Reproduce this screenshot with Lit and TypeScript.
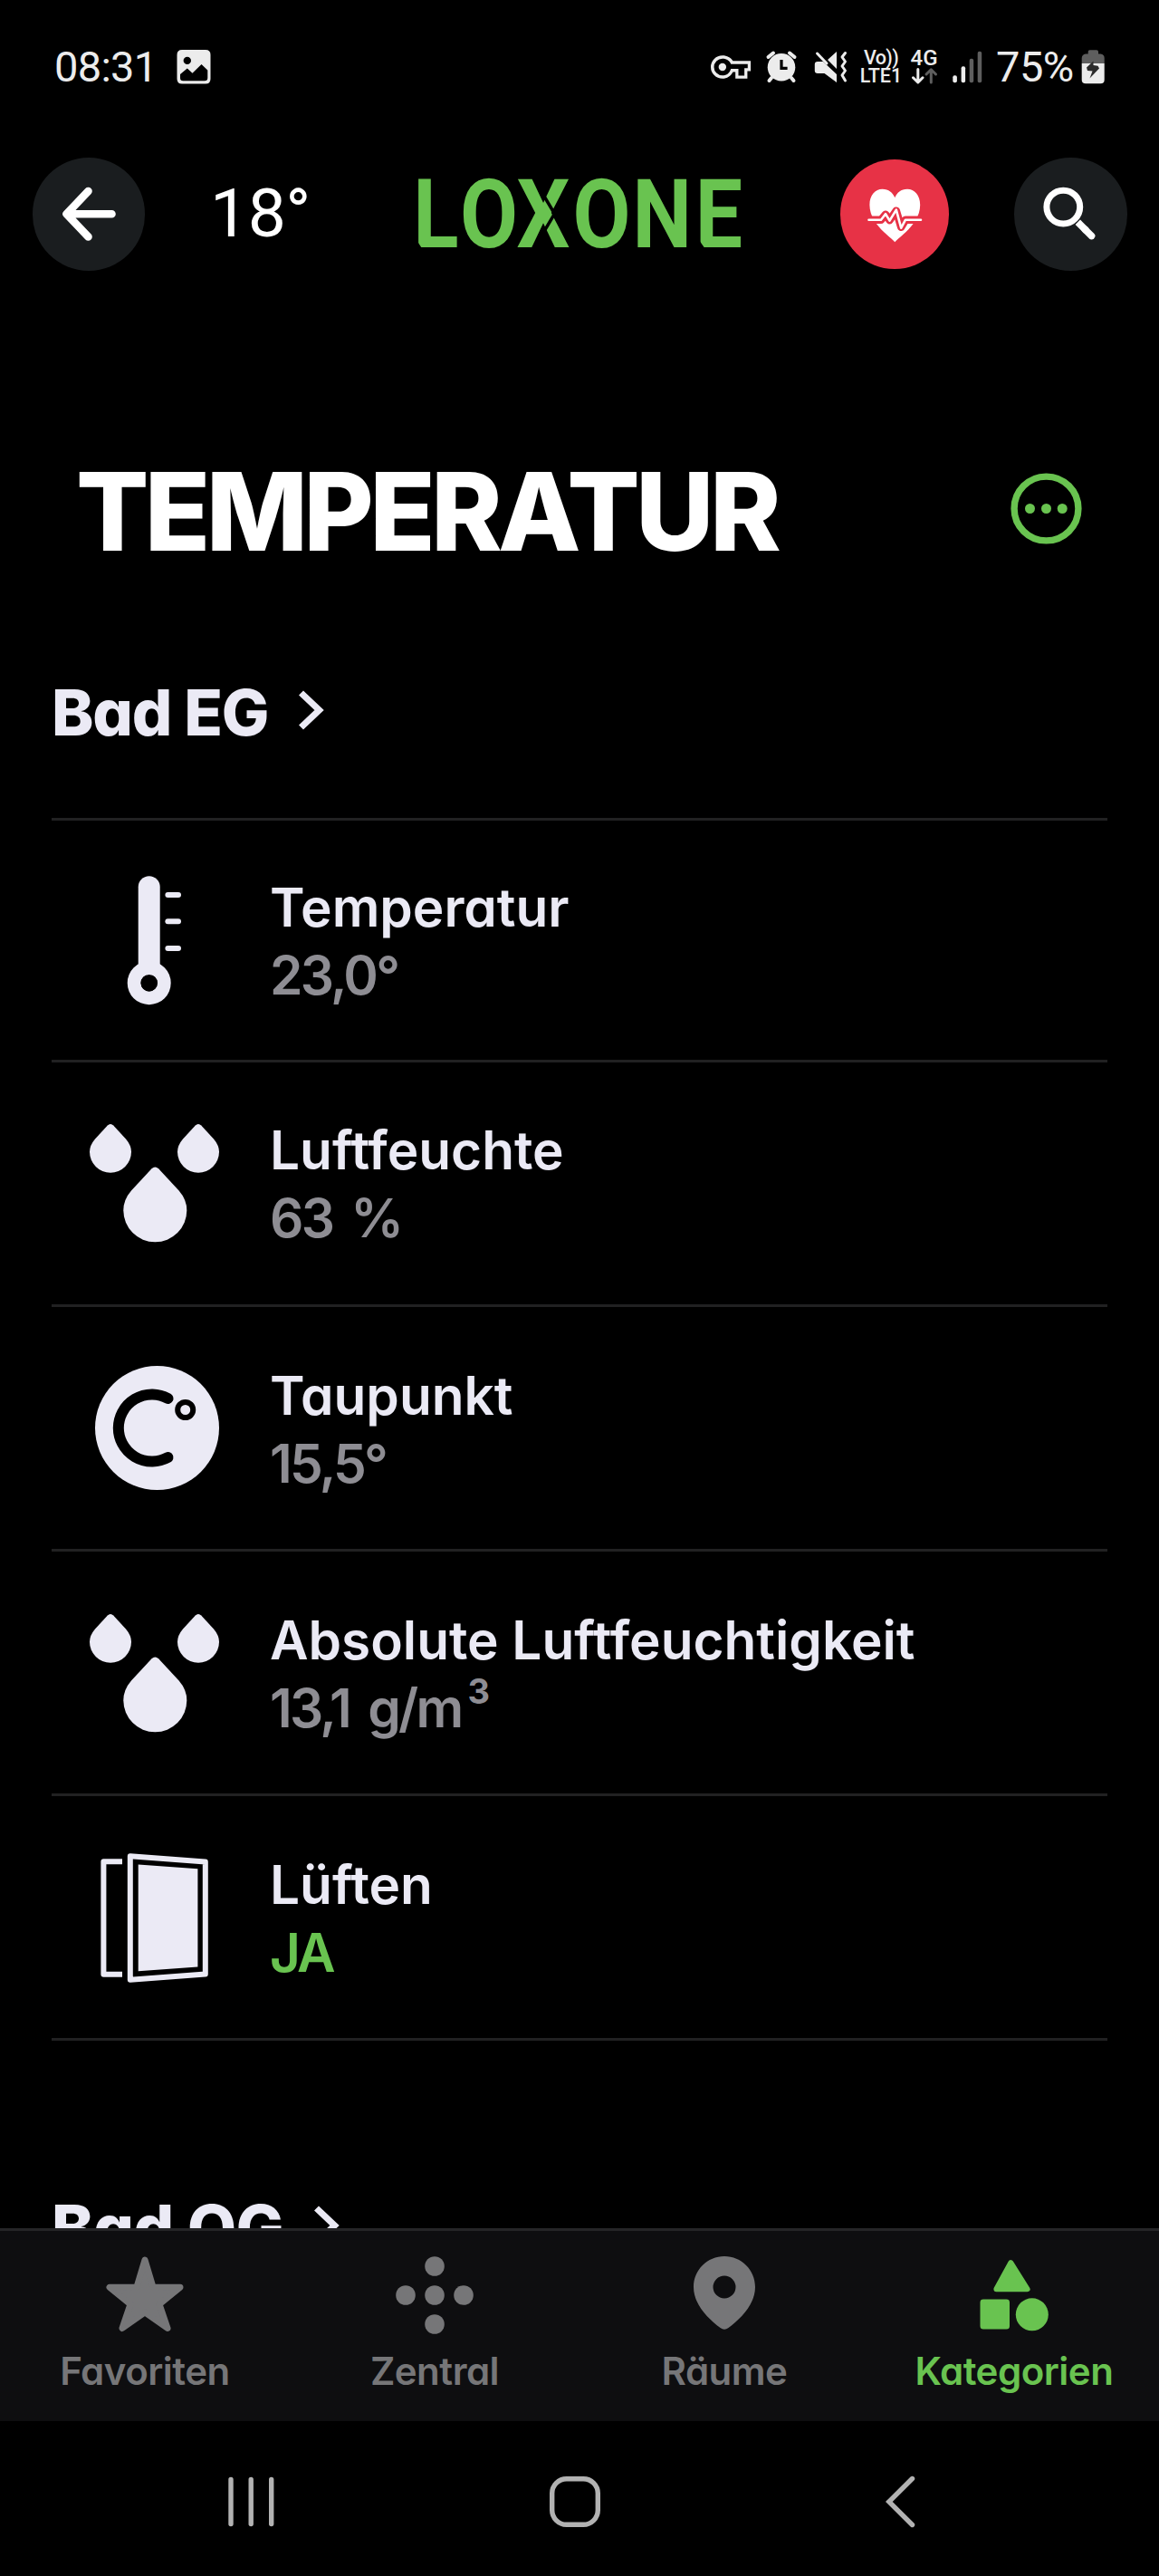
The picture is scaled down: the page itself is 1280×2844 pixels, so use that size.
import { LitElement, html, css, svg, nothing } from "lit";
import { customElement, property } from "lit/decorators.js";

const icons: Record<string, unknown> = {
  thermometer: svg`
    <rect x="53.7" y="1.2" width="24" height="110" rx="12"/>
    <path fill-rule="evenodd" d="M65.7 95.2a24 24 0 1 0 0 48a24 24 0 1 0 0-48zM65.7 110a9.2 9.2 0 1 1 0 18.4a9.2 9.2 0 1 1 0-18.4z"/>
    <path class="hole" d="M65.7 110a9.2 9.2 0 1 1 0 18.4a9.2 9.2 0 1 1 0-18.4z"/>
    <rect x="83.4" y="18.9" width="17.6" height="6" rx="3"/>
    <rect x="83.4" y="48.2" width="17.6" height="6" rx="3"/>
    <rect x="83.4" y="77.9" width="17.6" height="6" rx="3"/>`,
  drops: svg`
    <path d="M19.8 8.4Q23 5.4 26.2 8.4L40 23.5Q46 30.5 46 37.8A23 23 0 0 1 0 37.8Q0 30.5 6 23.5Z"/>
    <path d="M116.8 8.4Q120 5.4 123.2 8.4L137 23.5Q143 30.5 143 37.8A23 23 0 0 1 97 37.8Q97 30.5 103 23.5Z"/>
    <path d="M68.5 56.2Q72.3 52.8 76.1 56.2L98.6 80.5Q107.3 90.5 107.3 102.3A35 35 0 0 1 37.3 102.3Q37.3 90.5 46 80.5Z"/>`,
  celsius: svg`
    <circle cx="74.5" cy="72.5" r="68.5"/>
    <path class="cut" stroke-width="12" stroke-linecap="round" d="M86.5 40A37 37 0 1 0 86.5 105"/>
    <circle class="cut" stroke-width="6" cx="105.7" cy="52.5" r="8.5"/>`,
  window: svg`
    <path class="line" stroke-width="6" stroke-linejoin="round" d="M36 10.3H15.4V134.7H36"/>
    <path class="line" stroke-width="6" stroke-linejoin="round" d="M44.8 4.3L127.8 10.5V134.6L44.8 140.8Z"/>
    <path d="M53.7 13.5L119.4 18.2V126.6L53.7 131.3Z"/>`,
  star: svg`
    <path stroke="currentColor" stroke-width="7" stroke-linejoin="round" d="M48 9L57 39L87 39.2L64 58L73 84.5L48 67L23 84.5L32 58L9 39.2L39 39Z"/>`,
  central: svg`
    <circle cx="48" cy="16" r="10.8"/><circle cx="16" cy="48" r="10.8"/><circle cx="48" cy="48" r="10.8"/>
    <circle cx="80" cy="48" r="10.8"/><circle cx="48" cy="80" r="10.8"/>`,
  pin: svg`
    <path fill-rule="evenodd" d="M48 5C29.2 5 14 20 14 39C14 58 30 74 43.5 84Q48 87.5 52.5 84C66 74 82 58 82 39C82 20 66.8 5 48 5ZM48 26.5A12.5 12.5 0 1 1 48 51.5A12.5 12.5 0 1 1 48 26.5Z"/>`,
  shapes: svg`
    <path stroke="currentColor" stroke-width="6" stroke-linejoin="round" d="M44.3 12.2L62.6 41.3H28.4Z"/>
    <rect x="10.5" y="52.6" width="32.5" height="33" rx="3.5"/>
    <circle cx="67.8" cy="69.3" r="18"/>`,
};

@customElement("status-bar")
export class StatusBar extends LitElement {
  static styles = css`
    :host {
      display: flex;
      align-items: center;
      height: 148px;
      padding: 0 60px;
      box-sizing: border-box;
      color: #ececec;
      font-family: Roboto, sans-serif;
      font-size: 47px;
      line-height: 56px;
    }
    svg { display: block; flex: none; fill: currentColor; overflow: visible; }
    .clock { width: 134.5px; letter-spacing: -0.7px; }
    .right { display: flex; align-items: center; margin-left: auto; flex: none; }
    .alarm { margin-left: 16px; }
    .mute { margin-left: 19px; }
    .stack { display: flex; flex-direction: column; align-items: center; height: 40px; font-weight: 500; white-space: nowrap; }
    .volte { margin-left: 14px; width: 46px; font-size: 21.5px; line-height: 20px; }
    .vo { letter-spacing: -0.6px; }
    .net { margin-left: 9px; width: 31px; font-size: 24px; line-height: 20px; }
    .signal { margin-left: 16px; }
    .charge { margin-left: 15px; width: 87px; letter-spacing: -0.5px; white-space: nowrap; }
    .battery { margin-left: 7px; }
    .dim { fill: #5e5e5e; }
  `;
  render() {
    return html`
      <span class="clock">08:31</span>
      <svg width="38" height="38" viewBox="0 0 38 38">
        <path fill-rule="evenodd" d="M6 0H32Q37.5 0 37.5 5.5V32Q37.5 37.5 32 37.5H6Q.5 37.5 .5 32V5.5Q.5 0 6 0ZM11.8 7.7A4.2 4.2 0 1 0 11.8 16.1A4.2 4.2 0 1 0 11.8 7.7ZM4 27V31Q4 34.2 7.2 34.2H31Q34.3 34.2 34.3 31V22.5L27.5 16L17.5 25.8L11.8 20.4Z"/>
      </svg>
      <div class="right">
        <svg width="45" height="26" viewBox="0 0 24.5 14">
          <path fill-rule="evenodd" d="M22 14h-7.2v-4h-1.5c-1.14 2.42-3.6 4-6.3 4a7 7 0 0 1 0-14c2.72 0 5.17 1.3 6.3 3.3H24v6.2h-2zM16.6 12.2h3.6v-4.5h2V5.2H12.1l-.4-.8C11 2.9 9.1 1.9 7 1.9a5.1 5.1 0 0 0 0 10.2c2.11 0 4.01-1.2 4.71-3.1l.4-.9h4.5z"/>
          <circle cx="7" cy="7" r="2.3"/>
        </svg>
        <svg class="alarm" width="34" height="36" viewBox="0 0 34 36">
          <circle cx="17" cy="18.2" r="15.3"/>
          <path fill="none" stroke="currentColor" stroke-width="4" stroke-linecap="round" d="M2.5 7L8 2.5M31.5 7L26 2.5M6 30L3.5 33M28 30L30.5 33"/>
          <path fill="none" stroke="#000" stroke-width="3.2" d="M17 10V19.3H23.6"/>
        </svg>
        <svg class="mute" width="37" height="36" viewBox="0 0 37 36">
          <path d="M4 12H10L25 26V35L11.5 25H4Q.8 25 .8 22V15Q.8 12 4 12ZM15 10L25 1V20Z"/>
          <path fill="none" stroke="currentColor" stroke-width="3" stroke-linecap="round" d="M3.5 3L14 14"/>
          <path fill="none" stroke="currentColor" stroke-width="3" stroke-linejoin="round" stroke-linecap="round" d="M34.5 2.5L31 7L34.5 12L31 17L34.5 22L31 27L34.5 33"/>
        </svg>
        <div class="stack volte"><span class="vo">Vo))</span><span>LTE1</span></div>
        <div class="stack net">
          <span>4G</span>
          <svg width="28" height="18" viewBox="0 0 28 18">
            <path fill="none" stroke="currentColor" stroke-width="3" stroke-linecap="round" stroke-linejoin="round" d="M6.8 2.5V16.5M1.5 11.8L6.8 17L12 11.8"/>
            <path fill="none" stroke="#5e5e5e" stroke-width="3" stroke-linecap="round" stroke-linejoin="round" d="M21.3 17V3M16 8L21.3 2.8L26.5 8"/>
          </svg>
        </div>
        <svg class="signal" width="33" height="36" viewBox="0 0 33 36">
          <rect x=".3" y="27.3" width="4.6" height="8" rx="2"/><rect x="9.6" y="17.3" width="4.5" height="18" rx="2"/>
          <rect class="dim" x="18.7" y="8.7" width="4.5" height="26.6" rx="2"/><rect class="dim" x="27.7" y=".7" width="4.5" height="34.6" rx="2"/>
        </svg>
        <span class="charge">75%</span>
        <svg class="battery" width="26" height="38" viewBox="0 0 26 38">
          <path class="dim" d="M7.7 2Q7.7 .3 9.5 .3H17Q19 .3 19 2V4.5H21.5Q25.7 5 25.7 9V15H.7V9Q1 5 5 4.5H7.7Z"/>
          <path d="M.7 15H25.7V33Q25.7 37.3 21.5 37.3H5Q.7 37.3 .7 33Z"/>
          <path fill="#2b2b2b" d="M13.5 12.5L6 19.5L7 23L12.5 23.5L9.5 31.5L20 20.5L18.5 17.8L13.5 17Z"/>
        </svg>
      </div>`;
  }
}

@customElement("app-header")
export class AppHeader extends LitElement {
  static styles = css`
    :host {
      display: flex;
      align-items: center;
      height: 124.6px;
      padding: 26px 35.5px 0;
      color: #fff;
      font-family: Roboto, sans-serif;
    }
    svg { display: block; overflow: visible; }
    .round { flex: none; width: 124.5px; height: 124.5px; border-radius: 50%; background: #1a1d1f; }
    .outside { margin-left: 72px; width: 229px; padding-bottom: 3px; font-size: 75px; line-height: 90px; letter-spacing: -0.5px; box-sizing: border-box; }
    .logo { flex: none; fill: #69c350; font: 700 105.5px Roboto, sans-serif; }
    .health { margin-left: 108.8px; width: 120.8px; height: 120.8px; background: #e73246; }
    .search { margin-left: 71.6px; }
  `;
  render() {
    return html`
      <div class="round">
        <svg width="124.5" height="124.5" viewBox="0 0 124.5 124.5" fill="none" stroke="currentColor" stroke-width="8.6" stroke-linecap="round" stroke-linejoin="round">
          <path d="M61.5 37L37.5 62.2L61.5 87.5M38 62.2H87.5"/>
        </svg>
      </div>
      <span class="outside">18°</span>
      <svg class="logo" width="358" height="78" viewBox="0 0 358 78">
        <text transform="scale(.88 1)" x="-5.5 53.5 124.5 195 270 348.5" y="76">LOXONE</text>
        <path fill="none" stroke="#000" stroke-width="3.5" d="M136 13L151.5 39L136 65"/>
        <path fill="#000" d="M-1 68V78H5.5ZM311 68V78H318Z"/>
      </svg>
      <div class="round health">
        <svg width="120.8" height="120.8" viewBox="928 175.3 120.8 120.8">
          <path fill="#fff" d="M988.3 266.5C984 261 960.4 247 960.4 225.5C960.4 214.5 966.5 208 974.5 208C981.5 208 986 212 988.3 217.5C990.6 212 995 208 1002 208C1010 208 1016.2 214.5 1016.2 225.5C1016.2 247 992.6 261 988.3 266.5Z"/>
          <path fill="none" stroke="#e73246" stroke-width="8.5" stroke-linejoin="round" d="M957 242H973L978 236L982.5 242.5L989.8 232L995.2 250L1000 242H1020"/>
          <path fill="none" stroke="#fff" stroke-width="2.6" stroke-linejoin="round" stroke-linecap="round" d="M959.5 242H973L978 235.5L982.5 243L989.8 231L995.2 251L1000 242H1017"/>
        </svg>
      </div>
      <div class="round search">
        <svg width="124.5" height="124.5" viewBox="0 0 124.5 124.5" fill="none" stroke="currentColor">
          <circle cx="54.3" cy="54.6" r="18.4" stroke-width="7"/>
          <path stroke-width="7.6" d="M70.3 71.3L80 81"/>
          <path stroke-width="7.6" stroke-linecap="round" d="M78 79L85.5 86.5"/>
        </svg>
      </div>`;
  }
}

@customElement("section-title")
export class SectionTitle extends LitElement {
  @property() label = "";
  static styles = css`
    :host { display: flex; align-items: center; height: 100px; padding-left: 57px; color: #ebeaf5; }
    .label { padding-top: 6px; font: 800 70px/90px Inter, sans-serif; font-feature-settings: "cv11"; letter-spacing: var(--title-spacing, -1.2px); }
    svg { display: block; margin-left: 33px; }
  `;
  render() {
    return html`<span class="label">${this.label}</span>
      <svg width="30" height="44" viewBox="0 0 30 44"><path fill="none" stroke="currentColor" stroke-width="7.2" d="M3.5 3L23.5 22L3.5 41"/></svg>`;
  }
}

@customElement("control-row")
export class ControlRow extends LitElement {
  @property() icon = "";
  @property() name = "";
  @property() value = "";
  @property() exponent = "";
  @property({ type: Boolean }) active = false;
  static styles = css`
    :host { display: flex; align-items: center; box-sizing: border-box; height: 270.2px; padding-left: 42px; border-bottom: 3.6px solid #212122; color: #ebeaf5; }
    svg { display: block; flex: none; fill: currentColor; overflow: visible; }
    .hole { fill: #000; }
    .cut { fill: none; stroke: #000; }
    .line { fill: none; stroke: currentColor; }
    .texts { display: flex; flex-direction: column; align-self: flex-end; padding: 0 0 var(--text-bottom, 57.5px) 55px; font: 600 58.5px/75px Inter, sans-serif; font-feature-settings: "cv11"; white-space: nowrap; }
    .name { letter-spacing: 0; }
    .value { color: #8e8d93; letter-spacing: -2.7px; word-spacing: 8px; }
    .active { color: #69c350; }
    .exp { font-size: 38px; line-height: 0; vertical-align: 26px; margin-left: 7px; font-weight: 700; }
  `;
  render() {
    return html`
      <svg width="144" height="144" viewBox="0 0 144 144">${icons[this.icon]}</svg>
      <div class="texts">
        <span class="name">${this.name}</span>
        <span class="value ${this.active ? "active" : ""}">${this.value}${this.exponent ? html`<span class="exp">${this.exponent}</span>` : nothing}</span>
      </div>`;
  }
}

@customElement("tab-bar")
export class TabBar extends LitElement {
  static styles = css`
    :host { display: grid; grid-template-columns: repeat(4, 1fr); box-sizing: border-box; height: 213px; border-top: 3.6px solid #252527; background: #0e0e10; }
    .tab { display: flex; flex-direction: column; align-items: center; padding-top: 23px; color: #767678; font: 600 42px/54px Inter, sans-serif; font-feature-settings: "cv11"; letter-spacing: -0.5px; }
    .selected { color: #69c350; }
    svg { display: block; fill: currentColor; margin-bottom: 9px; }
  `;
  private tabs = [
    { icon: "star", label: "Favoriten" },
    { icon: "central", label: "Zentral" },
    { icon: "pin", label: "Räume" },
    { icon: "shapes", label: "Kategorien", selected: true },
  ];
  render() {
    return this.tabs.map(
      (t) => html`<div class="tab ${t.selected ? "selected" : ""}">
        <svg width="96" height="96" viewBox="0 0 96 96">${icons[t.icon]}</svg>
        <span>${t.label}</span>
      </div>`,
    );
  }
}

@customElement("system-nav")
export class SystemNav extends LitElement {
  static styles = css`
    :host { display: flex; align-items: center; height: 171px; padding: 7px 0 0 252px; box-sizing: border-box; color: #b2b2b2; }
    svg { display: block; fill: none; stroke: currentColor; stroke-width: 5.4; }
    .home { margin-left: 304px; }
    .back { margin-left: 314.5px; }
  `;
  render() {
    return html`
      <svg width="51" height="58" viewBox="0 0 51 58" stroke-linecap="round"><path d="M3 4.5V53.5M25.2 4.5V53.5M47.7 4.5V53.5"/></svg>
      <svg class="home" width="56" height="58" viewBox="0 0 56 58"><rect x="2.7" y="3.7" width="50.6" height="50.6" rx="16"/></svg>
      <svg class="back" width="33" height="58" viewBox="0 0 33 58" stroke-linecap="round"><path d="M29.5 3.5L3.8 29L29.5 54.5"/></svg>`;
  }
}

@customElement("app-root")
export class AppRoot extends LitElement {
  static styles = css`
    :host { display: flex; flex-direction: column; width: 1280px; height: 2844px; overflow: hidden; background: #000; }
    .content { flex: 1; min-height: 0; overflow: hidden; display: flex; flex-direction: column; }
    .content > * { flex: none; }
    .heading { display: flex; align-items: center; justify-content: space-between; height: 120px; margin-top: 202.7px; padding: 0 84.8px 0 84px; }
    .title { margin: 0; padding-top: 7px; color: #fff; font: 800 119px/120px Inter, sans-serif; letter-spacing: -4.7px; }
    .more { display: block; fill: #69c350; }
    .ring { fill: none; stroke: #69c350; stroke-width: 7.4; }
    .first { margin-top: 112.7px; }
    .list { display: flex; flex-direction: column; margin: 69.3px 57px 0; border-top: 3.6px solid #212122; }
    .short { height: 266.4px; --text-bottom: 56px; }
    .next { margin-top: 154px; --title-spacing: -0.3px; }
  `;
  render() {
    return html`
      <status-bar></status-bar>
      <app-header></app-header>
      <div class="content">
        <div class="heading">
          <h1 class="title">TEMPERATUR</h1>
          <svg class="more" width="79" height="79" viewBox="0 0 79 79">
            <circle class="ring" cx="39.5" cy="39.5" r="35.4"/>
            <circle cx="21.5" cy="39.5" r="5.5"/><circle cx="39.5" cy="39.5" r="5.5"/><circle cx="57.2" cy="39.5" r="5.5"/>
          </svg>
        </div>
        <section-title class="first" label="Bad EG"></section-title>
        <div class="list">
          <control-row class="short" icon="thermometer" name="Temperatur" value="23,0°"></control-row>
          <control-row icon="drops" name="Luftfeuchte" value="63 %"></control-row>
          <control-row icon="celsius" name="Taupunkt" value="15,5°"></control-row>
          <control-row icon="drops" name="Absolute Luftfeuchtigkeit" value="13,1 g/m" exponent="3"></control-row>
          <control-row icon="window" name="Lüften" value="JA" active></control-row>
        </div>
        <section-title class="next" label="Bad OG"></section-title>
      </div>
      <tab-bar></tab-bar>
      <system-nav></system-nav>`;
  }
}
